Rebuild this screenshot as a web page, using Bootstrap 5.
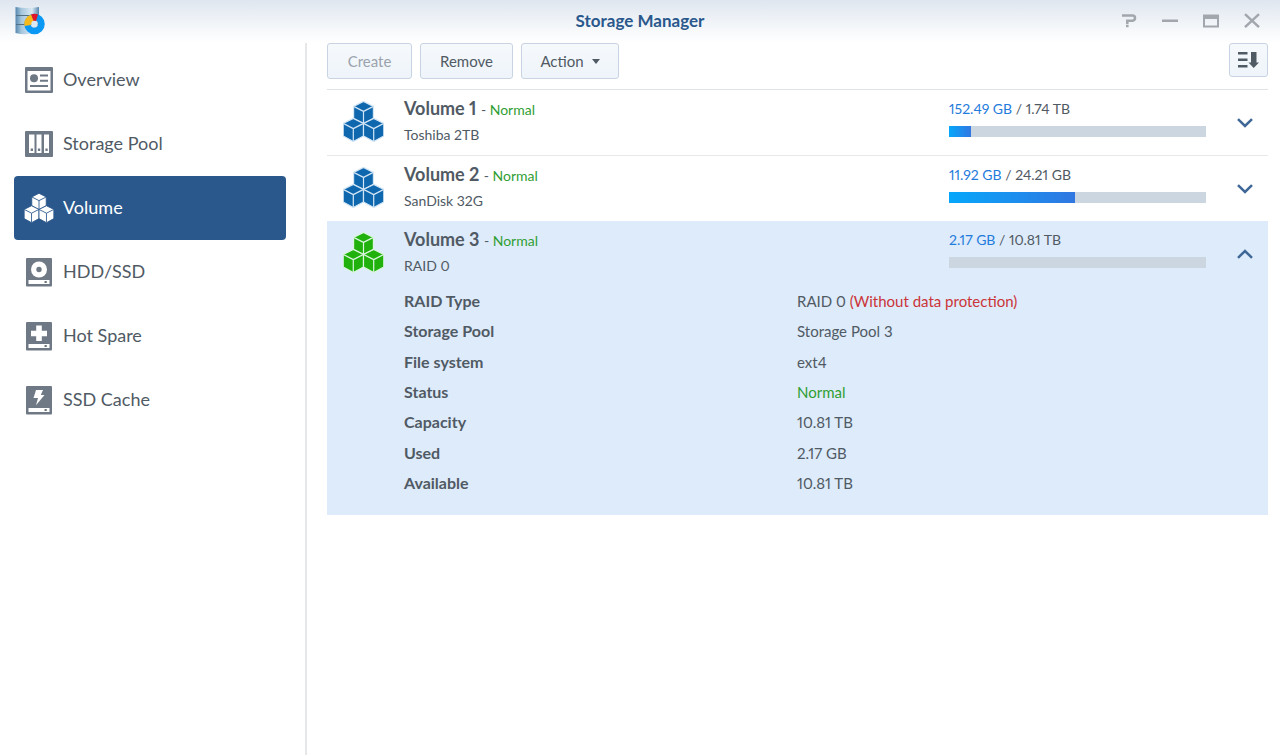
<!DOCTYPE html>
<html lang="en">
<head>
<meta charset="utf-8">
<meta name="viewport" content="width=device-width, initial-scale=1">
<title>Storage Manager</title>
<link href="https://cdn.jsdelivr.net/npm/bootstrap@5.3.0/dist/css/bootstrap.min.css" rel="stylesheet">
<style>
  body { font-family: Lato, "Liberation Sans", sans-serif; font-size: 15px; color: #505a64; background: #fff; font-variant-numeric: proportional-nums; }
  .titlebar { height: 43px; background: linear-gradient(#dfe6ef, #f3f6f9 60%, #fff); }
  .titlebar h1 { font-size: 17px; line-height: 42px; font-weight: 700; color: #2a588c; }
  .app-logo { left: 14px; top: 6px; }
  .win-controls { right: 20px; top: 12px; gap: 25px; }
  .win-controls button, .toggle { border: 0; background: none; padding: 0; line-height: 0; color: #a2a7ad; }
  .side { width: 307px; flex: none; border-right: 2px solid #e6e7e8; padding: 5px 19px 0 14px; }
  .side .nav-link { height: 64px; display: flex; align-items: center; gap: 9px; padding: 0 10px 1px; font-size: 18px; color: #505a64; border-radius: 4px; }
  .side .nav-link.active { background: #2a588c; color: #fff; }
  .side svg { flex: none; color: #6f7985; }
  .side .active svg { color: #fff; --edge: #2a588c; }
  .content { padding: 0 12px 0 20px; }
  .tool { --bs-btn-font-size: 15px; --bs-btn-padding-x: 0; --bs-btn-padding-y: 0; --bs-btn-color: #505a64; --bs-btn-border-color: #c8d4e1; --bs-btn-border-radius: 3px; --bs-btn-disabled-color: #9aa3ad; --bs-btn-disabled-border-color: #c8d4e1; --bs-btn-disabled-opacity: 1; height: 36px; background: linear-gradient(#f6f9fc, #eef4fa); }
  .tool-create { width: 85px; } .tool-remove { width: 93px; } .tool-action { width: 98px; }
  .tool-sort { width: 39px; height: 34px; line-height: 0; }
  .volumes { margin-top: 10px; border-top: 1px solid #e0e3e6; }
  .volume + .volume:not(.open) { border-top: 1px solid #e6e8ea; }
  .volume-head { height: 65px; padding: 5px 15px 0 16px; font-size: 14px; line-height: 26px; }
  .volume.open { background: #deebfa; padding-bottom: 16px; }
  .volume-name { font-size: 18px; line-height: 26px; font-weight: 700; margin: 0; }
  .volume-name span { font-size: 14px; font-weight: 400; }
  .volume-note { line-height: 24px; margin: 0; }
  .cubes { color: #0f67ae; --edge: #d3e6f5; margin: 6px 20px 0 0; flex: none; }
  .open .cubes { color: #20b10c; --edge: #d9f5dd; }
  .usage { width: 257px; margin-right: 31px; padding-top: 1px; }
  .usage .progress { --bs-progress-height: 11px; --bs-progress-bg: #ccd6e1; --bs-progress-border-radius: 0; margin-top: 4px; }
  .usage .progress-bar { background: linear-gradient(90deg, #06a7fb, #3177e1); }
  .used { color: #1f7bdc; }
  .ok { color: #2f9e33; }
  .warn { color: #cb3438; }
  .toggle { color: #3f6797; margin-bottom: 4px; }
  .facts { height: 213px; margin-left: 77px; width: calc(100% - 77px); }
  .facts th { width: 393px; font-size: 16px; font-weight: 700; }
  .facts th, .facts td { padding: 0 0 1px; line-height: 24px; vertical-align: middle; }
</style>
</head>
<body>
<svg class="d-none" aria-hidden="true">
  <symbol id="cubes" viewBox="0 0 41 41">
    <g fill="currentColor" stroke="var(--edge)" stroke-width="1.2" stroke-linejoin="round">
      <path d="M20.5 0.4 30.4 5.4V17.4L20.5 23 10.6 17.4V5.4Z"/>
      <path d="M10.6 5.4 20.5 10.4 30.4 5.4M20.5 10.4V23"/>
      <path d="M10.3 17.4 20.5 22.4V35L10.3 40.6.2 35V22.4Z"/>
      <path d="M.2 22.4 10.3 27.6 20.5 22.4M10.3 27.6V40.6"/>
      <path d="M30.7 17.4 40.8 22.4V35L30.7 40.6 20.5 35V22.4Z"/>
      <path d="M20.5 22.4 30.7 27.6 40.8 22.4M30.7 27.6V40.6"/>
    </g>
  </symbol>
</svg>
<div class="d-flex flex-column min-vh-100">
  <header class="titlebar position-relative text-center">
    <svg class="app-logo position-absolute" width="32" height="30" viewBox="0 0 32 30">
      <defs><linearGradient id="disk"><stop offset="0" stop-color="#5586ad"/><stop offset=".25" stop-color="#a5c6dd"/><stop offset=".7" stop-color="#dce9f2"/><stop offset="1" stop-color="#5587ad"/></linearGradient></defs>
      <path d="M1.5 1Q13 3 25 1V26Q13 30 1.5 27Z" fill="url(#disk)"/>
      <path d="M2 9.500H25M2 18.500H25" stroke="#527084" stroke-width="1.2"/>
      <circle cx="20.5" cy="18" r="7" fill="none" stroke="#0a98f5" stroke-width="6.5"/>
      <path d="M17 8.400A10.3 10.3 0 0 1 24 8.400L22 15H19Z" fill="#df1728"/>
      <path d="M17 8.400A10.3 10.3 0 0 0 10.3 20L16.8 19 19.6 15Z" fill="#f8b91c"/>
      <circle cx="20.5" cy="18" r="3.2" fill="#d9e9f5"/>
    </svg>
    <h1 class="m-0">Storage Manager</h1>
    <div class="win-controls position-absolute d-flex">
      <button type="button" aria-label="Help"><svg width="16" height="17" viewBox="0 0 16 17" fill="none" stroke="currentColor" stroke-width="2.5"><path d="M1 3.500H11.500Q14 3.500 14 6T11.500 8.700H6.300V12M6.300 12.800V15.300"/></svg></button>
      <button type="button" aria-label="Minimize"><svg width="16" height="17" viewBox="0 0 16 17"><path d="M0 7.500H16V10H0Z" fill="currentColor"/></svg></button>
      <button type="button" aria-label="Maximize"><svg width="16" height="17" viewBox="0 0 16 17"><path fill="currentColor" fill-rule="evenodd" d="M0 2.500H16V15.500H0ZM2 7V13.500H14V7Z"/></svg></button>
      <button type="button" aria-label="Close"><svg width="16" height="17" viewBox="0 0 16 17" stroke="currentColor" stroke-width="2.5"><path d="M1 2.200 15 15.200M15 2.200 1 15.200"/></svg></button>
    </div>
  </header>
  <div class="d-flex flex-grow-1">
    <nav class="side" aria-label="Sections">
      <div class="nav flex-column">
        <a class="nav-link" href="#"><svg width="30" height="30" viewBox="0 0 30 30" fill="currentColor"><path fill-rule="evenodd" d="M2 2H28Q29 2 29 3V27Q29 28 28 28H2Q1 28 1 27V3Q1 2 2 2ZM3.500 6V25.500H26.500V6Z"/><circle cx="10" cy="13.3" r="4"/><path d="M16 9.500H24V11.500H16ZM16 14.700H24V16.700H16ZM6 20H24V22H6Z"/></svg>Overview</a>
        <a class="nav-link" href="#"><svg width="30" height="30" viewBox="0 0 30 30"><rect x="1" y="2" width="28" height="26" rx="1" fill="currentColor"/><path d="M5 5.500H10.500V24H5ZM12.500 5.500H17.500V24H12.500ZM20 5.500H25V24H20Z" fill="#fff"/><path d="M6.700 19.500H9V22H6.700ZM13.900 19.500H16.200V22H13.900ZM21.400 19.500H23.700V22H21.400Z" fill="currentColor"/></svg>Storage Pool</a>
        <a class="nav-link active" href="#" aria-current="page"><svg width="30" height="30"><use href="#cubes"/></svg>Volume</a>
        <a class="nav-link" href="#"><svg width="30" height="30" viewBox="0 0 30 30"><rect x="2" y="1" width="26" height="28.5" rx="1" fill="currentColor"/><circle cx="15" cy="12.5" r="8" fill="#fff"/><circle cx="15" cy="12.5" r="2.7" fill="currentColor"/><path d="M4.500 23H25.500V27H4.500Z" fill="#fff"/><path d="M20.500 24H22.800V26H20.500Z" fill="currentColor"/></svg>HDD/SSD</a>
        <a class="nav-link" href="#"><svg width="30" height="30" viewBox="0 0 30 30"><rect x="2" y="1" width="26" height="28.5" rx="1" fill="currentColor"/><path d="M12.200 4.500H17.800V9.700H23V15.300H17.800V20H12.200V15.300H7V9.700H12.200Z" fill="#fff"/><path d="M4.500 23H25.500V27H4.500Z" fill="#fff"/><path d="M20.500 24H22.800V26H20.500Z" fill="currentColor"/></svg>Hot Spare</a>
        <a class="nav-link" href="#"><svg width="30" height="30" viewBox="0 0 30 30"><rect x="2" y="1" width="26" height="28.5" rx="1" fill="currentColor"/><path d="M12 5H19L16.800 10H20.500L12 20.300 14 13H9.500Z" fill="#fff"/><path d="M4.500 23H25.500V27H4.500Z" fill="#fff"/><path d="M20.500 24H22.800V26H20.500Z" fill="currentColor"/></svg>SSD Cache</a>
      </div>
    </nav>
    <main class="content flex-grow-1">
      <div class="d-flex gap-2">
        <button type="button" class="btn tool tool-create" disabled>Create</button>
        <button type="button" class="btn tool tool-remove">Remove</button>
        <button type="button" class="btn tool tool-action d-flex align-items-center justify-content-center gap-2">Action<svg width="8" height="5" viewBox="0 0 8 5"><path d="M0 0H8L4 5Z" fill="currentColor"/></svg></button>
        <button type="button" class="btn tool tool-sort ms-auto" aria-label="Sort"><svg width="22" height="18" viewBox="0 0 22 18" fill="currentColor"><path d="M0 1H9.500V3.500H0ZM0 7.500H9.500V10H0ZM0 14H9.500V16.500H0ZM13 1H18.500V11.500H21L15.700 17 10.500 11.500H13Z"/></svg></button>
      </div>
      <div class="volumes">
        <section class="volume">
          <div class="volume-head d-flex">
            <svg class="cubes" width="41" height="41"><use href="#cubes"/></svg>
            <div class="flex-grow-1"><h2 class="volume-name">Volume 1 <span>- <span class="ok">Normal</span></span></h2><p class="volume-note">Toshiba 2TB</p></div>
            <div class="usage"><div><span class="used">152.49 GB</span> / 1.74 TB</div><div class="progress" role="progressbar" aria-label="Volume 1 usage" aria-valuenow="9" aria-valuemin="0" aria-valuemax="100"><div class="progress-bar" style="width:8.6%"></div></div></div>
            <button type="button" class="toggle" aria-label="Expand Volume 1"><svg width="16" height="10" viewBox="0 0 16 10" fill="none" stroke="currentColor" stroke-width="2.5"><path d="M1 1.200 8 8 15 1.200"/></svg></button>
          </div>
        </section>
        <section class="volume">
          <div class="volume-head d-flex">
            <svg class="cubes" width="41" height="41"><use href="#cubes"/></svg>
            <div class="flex-grow-1"><h2 class="volume-name">Volume 2 <span>- <span class="ok">Normal</span></span></h2><p class="volume-note">SanDisk 32G</p></div>
            <div class="usage"><div><span class="used">11.92 GB</span> / 24.21 GB</div><div class="progress" role="progressbar" aria-label="Volume 2 usage" aria-valuenow="49" aria-valuemin="0" aria-valuemax="100"><div class="progress-bar" style="width:49.2%"></div></div></div>
            <button type="button" class="toggle" aria-label="Expand Volume 2"><svg width="16" height="10" viewBox="0 0 16 10" fill="none" stroke="currentColor" stroke-width="2.5"><path d="M1 1.200 8 8 15 1.200"/></svg></button>
          </div>
        </section>
        <section class="volume open">
          <div class="volume-head d-flex">
            <svg class="cubes" width="41" height="41"><use href="#cubes"/></svg>
            <div class="flex-grow-1"><h2 class="volume-name">Volume 3 <span>- <span class="ok">Normal</span></span></h2><p class="volume-note">RAID 0</p></div>
            <div class="usage"><div><span class="used">2.17 GB</span> / 10.81 TB</div><div class="progress" role="progressbar" aria-label="Volume 3 usage" aria-valuenow="0" aria-valuemin="0" aria-valuemax="100"><div class="progress-bar" style="width:0%"></div></div></div>
            <button type="button" class="toggle" aria-label="Collapse Volume 3"><svg width="16" height="10" viewBox="0 0 16 10" fill="none" stroke="currentColor" stroke-width="2.5"><path d="M1 8.800 8 2 15 8.800"/></svg></button>
          </div>
          <table class="facts">
            <tbody>
              <tr><th scope="row">RAID Type</th><td>RAID 0 <span class="warn">(Without data protection)</span></td></tr>
              <tr><th scope="row">Storage Pool</th><td>Storage Pool 3</td></tr>
              <tr><th scope="row">File system</th><td>ext4</td></tr>
              <tr><th scope="row">Status</th><td class="ok">Normal</td></tr>
              <tr><th scope="row">Capacity</th><td>10.81 TB</td></tr>
              <tr><th scope="row">Used</th><td>2.17 GB</td></tr>
              <tr><th scope="row">Available</th><td>10.81 TB</td></tr>
            </tbody>
          </table>
        </section>
      </div>
    </main>
  </div>
</div>
<script src="https://cdn.jsdelivr.net/npm/bootstrap@5.3.0/dist/js/bootstrap.bundle.min.js"></script>
</body>
</html>
